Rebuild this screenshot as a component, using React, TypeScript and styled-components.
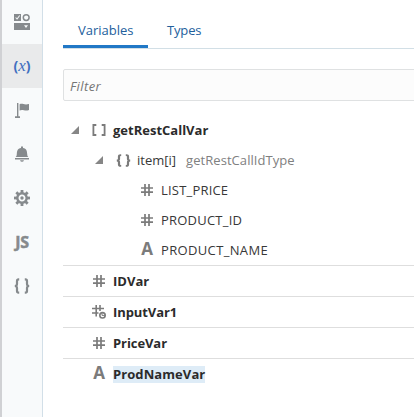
import React from "react";
import styled, { createGlobalStyle } from "styled-components";

const GlobalStyle = createGlobalStyle`
  *, *::before, *::after { box-sizing: border-box; }
  body {
    margin: 0;
    background: #fff;
    font-family: "Open Sans", "Noto Sans", sans-serif;
    font-size: 13px;
    color: #333;
    overflow: hidden;
  }
`;

const Page = styled.div`
  display: flex;
  width: 414px;
  height: 417px;
  overflow: hidden;
`;

const Rail = styled.nav`
  width: 43px;
  flex: none;
  background: #f8fafb;
  border-left: 2px solid #d0d1d4;
  border-right: 1px solid #d2dfe8;
`;

const RailButton = styled.button<{ $active?: boolean }>`
  display: flex;
  align-items: center;
  justify-content: center;
  width: 40px;
  height: 44px;
  padding: 0;
  border: 0;
  background: ${(p) => (p.$active ? "#e9eaeb" : "transparent")};
  color: #868a8d;
`;

const Glyph = styled.svg`
  display: block;
  flex: none;
  overflow: visible;
`;

const ScriptLabel = styled.span`
  font: 700 16px/20px "Open Sans", sans-serif;
  letter-spacing: -0.4px;
  -webkit-text-stroke: 0.5px currentColor;
`;

const FunctionLabel = styled.span`
  display: flex;
  font: 700 14px/18px "Open Sans", sans-serif;
  color: #3f6fc0;
  i {
    font: italic 400 17px/17px "Liberation Serif", serif;
  }
`;

const Panel = styled.main`
  flex: 1;
  min-width: 0;
  padding-left: 20px;
`;

const Tabs = styled.div`
  display: flex;
  height: 49px;
  padding-top: 13px;
  border-bottom: 1px solid #d2dfe6;
`;

const Tab = styled.button<{ $active?: boolean }>`
  height: 35px;
  padding: 0 15px;
  border: 0;
  border-bottom: 3px solid ${(p) => (p.$active ? "#2178c6" : "transparent")};
  background: none;
  font: inherit;
  line-height: 34px;
  color: #22609c;
  width: ${(p) => (p.$active ? 85 : 72)}px;
  margin-right: 4px;
  text-align: left;
`;

const Filter = styled.input`
  display: block;
  width: 360px;
  height: 32px;
  margin: 20px 0 14px;
  padding: 2px 6px 0;
  border: 1px solid #dfe1e2;
  border-radius: 2px;
  background: #fcfcfc;
  font: inherit;
  outline: none;
  &::placeholder {
    color: #757575;
    font-style: italic;
    letter-spacing: 0.4px;
    opacity: 1;
  }
`;

const Row = styled.div<{ $level: number; $line?: boolean }>`
  display: flex;
  align-items: center;
  height: ${(p) => (p.$line ? 31 : 30)}px;
  padding-left: ${(p) => p.$level * 24}px;
  border-bottom: ${(p) => (p.$line ? "1px solid #dedede" : "0")};
`;

const Toggle = styled.span`
  display: flex;
  justify-content: center;
  width: 24px;
  color: #868686;
`;

const TypeIcon = styled.span`
  display: flex;
  justify-content: center;
  width: 24px;
  color: #7b7b7b;
`;

const Name = styled.span<{ $bold?: boolean; $selected?: boolean; $track: number }>`
  margin-left: 2px;
  line-height: 17px;
  white-space: pre;
  font-weight: ${(p) => (p.$bold ? 700 : 400)};
  letter-spacing: ${(p) => p.$track}px;
  color: ${(p) => (p.$bold ? "#2b2b2b" : "#383838")};
  background: ${(p) => (p.$selected ? "#deecf7" : "transparent")};
`;

const TypeName = styled.span`
  margin-left: 10px;
  letter-spacing: 0.06px;
  color: #808080;
`;

const Label = styled.span<{ $track: number }>`
  letter-spacing: ${(p) => p.$track}px;
`;

const Braces = ({ gap = 5, h = 16 }: { gap?: number; h?: number }) => (
  <Glyph width={11 + gap} height={h} viewBox={`0 0 ${11 + gap} 16`} preserveAspectRatio="none" fill="none" stroke="currentColor" strokeWidth="2.2">
    <path d="M5.2 1.3H4.6Q3 1.3 3 3v3Q3 8 .8 8Q3 8 3 10v3q0 1.700 1.600 1.700h.6" />
    <path transform={`translate(${11 + gap} 0) scale(-1 1)`} d="M5.2 1.3H4.6Q3 1.3 3 3v3Q3 8 .8 8Q3 8 3 10v3q0 1.700 1.600 1.700h.6" />
  </Glyph>
);

const Brackets = () => (
  <Glyph width="14" height="12" fill="none" stroke="currentColor" strokeWidth="1.8">
    <path d="M4.3 1H1.4v10h2.9M9.7 1h2.9v10H9.7" />
  </Glyph>
);

const Hash = () => (
  <Glyph width="12" height="12" fill="none" stroke="currentColor" strokeWidth="1.7">
    <path d="M4 0v12M8 0v12M0 4h12M0 8.2h12" />
  </Glyph>
);

const HashInput = () => (
  <Glyph width="14" height="14" fill="none" stroke="currentColor" strokeWidth="1.6">
    <path d="M4.2 0v11.500M8 0v6M0 3.500h12M0 8h6.500" />
    <circle cx="10.5" cy="10.3" r="2.7" />
    <path d="M10 8.200v2.200h3" strokeWidth="1" />
  </Glyph>
);

const LetterA = styled.span`
  font: 700 17px/18px "Open Sans", sans-serif;
  margin-top: -2px;
`;

const Arrow = () => (
  <Glyph width="8" height="8" fill="currentColor">
    <path d="M8 0v8H0z" />
  </Glyph>
);

const ComponentsIcon = () => (
  <Glyph width="16" height="16" fill="currentColor">
    <path fillRule="evenodd" d="M0 0h7v7H0zM1.3 3.8l1.8 2 3-4-.8-.6-2.3 3-1-1z" />
    <circle cx="12.2" cy="3.6" r="2.9" fill="none" stroke="currentColor" strokeWidth="1.5" />
    <path fillRule="evenodd" d="M0 9h16v7H0zM10 11.2l2 2.8 2-2.8z" />
  </Glyph>
);

const FlagIcon = () => (
  <Glyph width="14" height="15" fill="currentColor">
    <path d="M2 0h1.4v13.3H5V15H0v-1.700h2z" />
    <path d="M4.6 1.2c3-1.500 4.2 1.300 9.4-.2v6c-4.400 1.800-6-1.300-9.400.5z" />
  </Glyph>
);

const BellIcon = () => (
  <Glyph width="14" height="16" fill="currentColor">
    <path d="M6 2V.5h2V2c3.500.5 4 3 4.200 6 .1 1.800.5 2.500 1.100 3H.7c.6-.5 1-1.200 1.100-3C2 5 2.500 2.500 6 2zM0 12h14v1.600H0zM5 14.300h4q-.5 1.500-2 1.500t-2-1.500z" />
  </Glyph>
);

const GearIcon = () => (
  <Glyph width="16" height="16" viewBox="-8 -8 16 16" fill="none" stroke="currentColor">
    <circle r="4.7" strokeWidth="2.4" />
    <circle r="1.7" fill="currentColor" stroke="none" />
    {[0, 45, 90, 135, 180, 225, 270, 315].map((a) => (
      <path key={a} d="M0-5v-3" strokeWidth="2.8" transform={`rotate(${a})`} />
    ))}
  </Glyph>
);

const variables = [
  { name: "IDVar", icon: <Hash />, track: 0 },
  { name: "InputVar1", icon: <HashInput />, track: -0.08 },
  { name: "PriceVar", icon: <Hash />, track: -0.08 },
];

const fields = [
  { name: "LIST_PRICE", icon: <Hash />, track: 0.2 },
  { name: "PRODUCT_ID", icon: <Hash />, track: 0.22 },
  { name: "PRODUCT_NAME", icon: <LetterA>A</LetterA>, track: 0.35 },
];

export default function App() {
  return (
    <Page>
      <GlobalStyle />
      <Rail>
        <RailButton><ComponentsIcon /></RailButton>
        <RailButton $active><FunctionLabel>(<i>x</i>)</FunctionLabel></RailButton>
        <RailButton><FlagIcon /></RailButton>
        <RailButton><BellIcon /></RailButton>
        <RailButton><GearIcon /></RailButton>
        <RailButton><ScriptLabel>JS</ScriptLabel></RailButton>
        <RailButton><Braces /></RailButton>
      </Rail>
      <Panel>
        <Tabs>
          <Tab $active><Label $track={0}>Variables</Label></Tab>
          <Tab><Label $track={-0.15}>Types</Label></Tab>
        </Tabs>
        <Filter placeholder="Filter" />
        <Row $level={0}>
          <Toggle><Arrow /></Toggle>
          <TypeIcon><Brackets /></TypeIcon>
          <Name $bold $track={0}>getRestCallVar</Name>
        </Row>
        <Row $level={1}>
          <Toggle><Arrow /></Toggle>
          <TypeIcon><Braces gap={4} h={13} /></TypeIcon>
          <Name $track={0}>item[i]</Name>
          <TypeName>getRestCallIdType</TypeName>
        </Row>
        {fields.map((f, i) => (
          <Row key={f.name} $level={3} $line={i === fields.length - 1}>
            <TypeIcon>{f.icon}</TypeIcon>
            <Name $track={f.track}>{f.name}</Name>
          </Row>
        ))}
        {variables.map((v) => (
          <Row key={v.name} $level={1} $line>
            <TypeIcon>{v.icon}</TypeIcon>
            <Name $bold $track={v.track}>{v.name}</Name>
          </Row>
        ))}
        <Row $level={1}>
          <TypeIcon><LetterA>A</LetterA></TypeIcon>
          <Name $bold $selected $track={0.08}>ProdNameVar</Name>
        </Row>
      </Panel>
    </Page>
  );
}
